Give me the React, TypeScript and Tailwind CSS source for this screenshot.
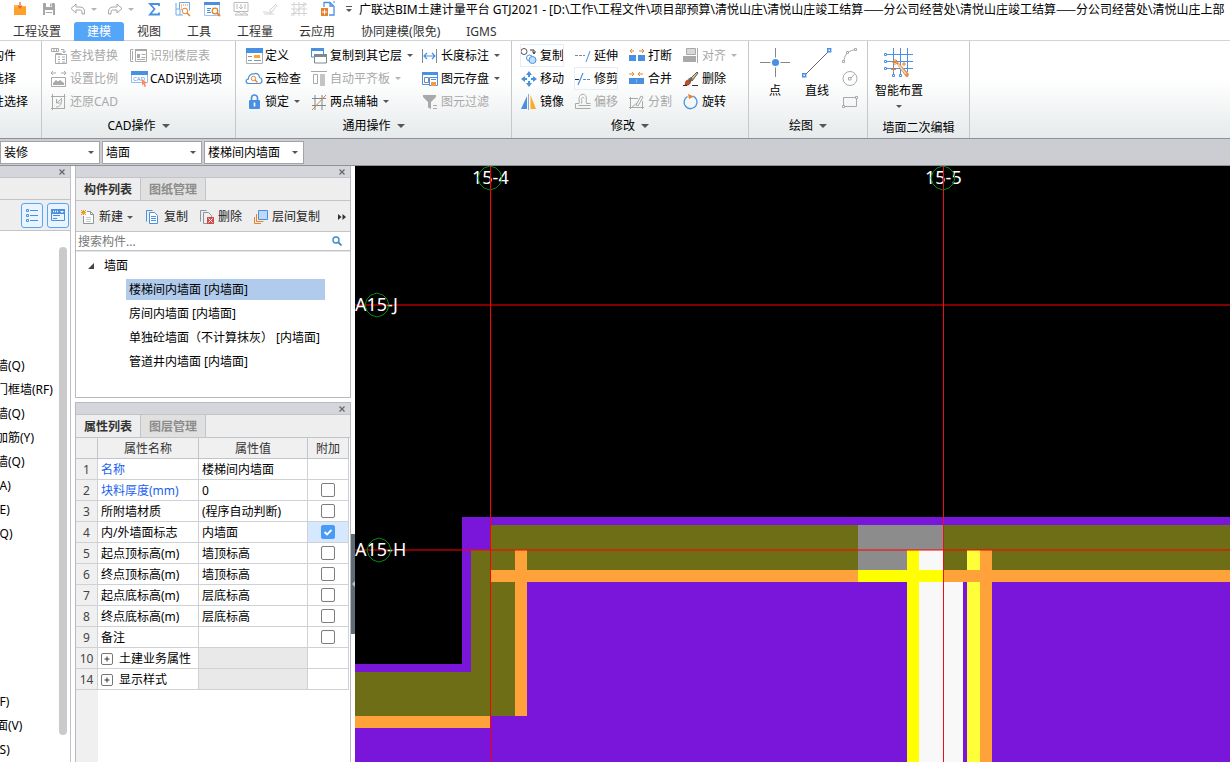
import React, { useState } from 'react';
import clsx from 'clsx';

const BLUE = '#4a90e2';
const GREY = '#a9a9a9';
const SLATE = '#7b8a92';
const ORANGE = '#e8822a';

type IconProps = { size?: number; className?: string; children: React.ReactNode };

function Icon({ size = 18, className, children }: IconProps) {
  return (
    <svg
      width={size}
      height={size}
      viewBox={`0 0 ${size} ${size}`}
      fill="none"
      className={clsx('shrink-0', className)}
      aria-hidden="true"
    >
      {children}
    </svg>
  );
}

function Caret({ className = 'text-[#555]', large }: { className?: string; large?: boolean }) {
  return (
    <svg
      width={large ? 8 : 6}
      height={large ? 4 : 3}
      viewBox="0 0 6 3"
      className={clsx('shrink-0', className)}
      aria-hidden="true"
    >
      <path d="M0 0h6L3 3z" fill="currentColor" />
    </svg>
  );
}

/* ---------- icons: quick access bar ---------- */

const OpenIcon = () => (
  <Icon>
    <path d="M3 5h4l1 1h7v9H3z" fill="#ffb54d" />
    <path d="M3 7h12v8H3z" fill="#fba12c" />
    <path d="M9 2v5M7 5.500 9 8l2-2.500" stroke="#e8622a" strokeWidth="1.2" />
  </Icon>
);

const SaveIcon = () => (
  <Icon>
    <path d="M3 3h11l1 1v11H3z" fill="#a6a6a6" />
    <path d="M6 3h6v4H6zM5 10h8v5H5z" fill="#fff" />
    <path d="M10 3.500h1.500v3H10zM6 12h6v1H6z" fill="#a6a6a6" />
  </Icon>
);

const UndoIcon = () => (
  <Icon>
    <path d="M2 8.500 7 4v3h4c3 0 4.500 2 4.500 4.500V14h-2.500v-2c0-1.500-.8-2-2-2H7v3z" stroke="#a4a4a4" />
  </Icon>
);

const RedoIcon = () => (
  <Icon>
    <path d="M16 8.500 11 4v3H7c-3 0-4.500 2-4.500 4.500V14H5v-2c0-1.500.8-2 2-2h4v3z" stroke="#a4a4a4" />
  </Icon>
);

const SigmaIcon = () => (
  <Icon>
    <path d="M14 6V4H5l4.500 5L5 14.500h9v-2" stroke={BLUE} strokeWidth="1.8" />
  </Icon>
);

const ReportIcon = () => (
  <Icon>
    <path d="M2 3v12h7M2 9h4v6M5.500 2.500h10v8M5.500 2.500V9" stroke="#6aa9ea" />
    <path d="M7 5h7M7 7h2M7 9h1" stroke={ORANGE} strokeDasharray="1 1" />
    <circle cx="11" cy="11" r="2.800" stroke={ORANGE} fill="#fff" />
    <path d="m13 13 3 3" stroke={ORANGE} strokeWidth="1.5" />
  </Icon>
);

const TableSearchIcon = () => (
  <Icon>
    <path d="M1.500 2.500h15v13h-15z" stroke="#9cc6ef" />
    <path d="M1 2h16v3H1z" fill={BLUE} />
    <path d="M4 8.500h4M4 10.500h3M4 12.500h4" stroke={BLUE} />
    <circle cx="12" cy="11" r="2.800" stroke={ORANGE} fill="#fff" strokeWidth="1.300" />
    <path d="m14 13 3 3" stroke={ORANGE} strokeWidth="1.8" />
  </Icon>
);

const MonitorIcon = () => (
  <Icon>
    <path d="M2 2.500h14v9H2zM9 4v5M7 7l2 2 2-2M5 4v5M13 4v5M3 15c2-3 4-3 6-1M9 15c2-3 4-3 7 0H3" stroke="#bbb" />
  </Icon>
);

const SketchIcon = () => (
  <Icon>
    <path d="M2 12.500c3-2 6 2 9 0M9 10l6-6M3 14h10M9 10v2h2l5-7" stroke="#d3d3d3" />
  </Icon>
);

const GridIcon = () => (
  <Icon>
    <path d="M4 2v14M9 2v14M14 2v14M1 4.500h16M1 9h16M1 13.500h16M1 16 16 3" stroke="#d3d3d3" />
  </Icon>
);

const DocumentAddIcon = () => (
  <Icon>
    <path d="M5 7V2.500h6l4 4V15h-5M11 2.500V6h4" stroke={BLUE} strokeWidth="1.300" />
    <path d="M2 8h7v8H2z" fill={ORANGE} />
    <path d="M5.500 9.500v5M3 12h5" stroke="#fff" />
    <path d="M15 1v2" stroke={BLUE} />
  </Icon>
);

/* ---------- icons: ribbon ---------- */

const FindReplaceIcon = () => (
  <Icon>
    <path d="M1.500 1.500h7v3h-7zM4 1.500v3M6.500 1.500v3M11 2.500h3V5M12.500 4 14 6l1.500-2M5.500 7.500h11v9h-11zM5.500 6.500h6" stroke={GREY} />
    <path d="M8 10h2M8 12.500h2M8 15h2M12 10h3M12 12.500h3M12 15h3" stroke={GREY} />
  </Icon>
);

const ScaleIcon = () => (
  <Icon>
    <path d="M1 3h5M3 1 1 3l2 2M11 3h5M14 1l2 2-2 2M1.500 7.500h14v9h-14z" stroke={GREY} />
    <path d="M3 15v-2l3-3 2 1.500L10 10l4 3v2z" fill={GREY} />
  </Icon>
);

const RestoreIcon = () => (
  <Icon>
    <path d="M2.500 1v16M1 3.500h14.500M14.500 1v14M1 15.500h14M6 14c4 0 6-3 5.500-8.500M12 5.500 7 9.500M6.500 6v4h4" stroke={GREY} />
  </Icon>
);

const FloorTableIcon = () => (
  <Icon>
    <path d="M3.500 2.500h-3v12h3M2.500 4v9M5.500 2.500h11v12h-11z" stroke={GREY} />
    <path d="M5 2h12v2H5zM7 7h3v4H7z" fill={GREY} />
    <path d="M11.500 7.500h4M11.500 10.500h4M7 12.500h8" stroke={GREY} />
  </Icon>
);

const CadIcon = () => (
  <Icon>
    <path d="M1.500 2.500h16v10h-16z" stroke="#8fbdf0" fill="#fff" />
    <path d="M1 1h17v4H1z" fill={BLUE} />
    <text x="3" y="11" fontSize="6" fill={BLUE}>CAD</text>
    <path d="m12 9 5 4-2 .5 1 3-1.500.5-1-3L12 16z" fill="#ff8a5c" />
  </Icon>
);

const DefineIcon = () => (
  <Icon>
    <path d="M1.500 1.500h16v15h-16z" stroke="#a8b0b5" fill="#fff" />
    <path d="M1 1h17v5H1z" fill={BLUE} />
    <path d="M9 8h6v3H9z" fill="#ffa52c" />
    <path d="M3 9.500h4M3 13.500h4M9 13.500h7" stroke="#8c979d" />
  </Icon>
);

const CloudCheckIcon = () => (
  <Icon>
    <path d="M4 13.500C.5 13.500 0 9.500 3.500 9 3 6 6 3.500 9 4c2-1.500 5.500 0 5.500 3.500 3 .5 3.500 5.500 0 6z" stroke={BLUE} strokeWidth="1.200" fill="#fff" />
    <circle cx="8.500" cy="8.500" r="2.200" stroke={ORANGE} />
    <path d="m10 10 2.500 2.500" stroke={ORANGE} strokeWidth="1.400" />
  </Icon>
);

const LockIcon = () => (
  <Icon>
    <path d="M6.500 8V5a3 3 0 0 1 6 0v3" stroke={BLUE} strokeWidth="1.600" />
    <rect x="4" y="7" width="11" height="9" rx="1" fill={BLUE} />
    <path d="M9.500 9.500v4" stroke="#fff" strokeWidth="1.600" />
  </Icon>
);

const CopyLayerIcon = () => (
  <Icon>
    <path d="M1.500 2h12v8h-12z" stroke={BLUE} />
    <path d="M1 1h13v3H1z" fill={BLUE} />
    <path d="M4.500 8h12v8h-12z" stroke={SLATE} fill="#fff" />
    <path d="M4 7h13v3H4z" fill={SLATE} />
  </Icon>
);

const AlignSlabIcon = () => (
  <Icon>
    <path d="M1 1.500h16M3.500 4.500h4v9h-4z" stroke={GREY} />
    <path d="M10 4h5v12h-5z" fill="#c4c4c4" />
  </Icon>
);

const TwoPointIcon = () => (
  <Icon>
    <path d="M5 2v15M12 2v15M2 5.500h14M2 12.500h14" stroke={SLATE} />
    <path d="M2 17 16 2" stroke={ORANGE} />
  </Icon>
);

const LengthIcon = () => (
  <Icon>
    <path d="M1.500 2v14M15.500 2v14" stroke={SLATE} />
    <path d="M3 9h11M6 6 3 9l3 3M11 6l3 3-3 3" stroke={BLUE} strokeWidth="1.200" />
  </Icon>
);

const StoreIcon = () => (
  <Icon>
    <path d="M1.500 2.500h15v12h-15z" stroke={BLUE} fill="#fff" />
    <path d="M1 2h16v3H1z" fill={BLUE} />
    <path d="M3.500 7.500h4v5h-4z" stroke={SLATE} />
    <path d="M8.500 7.500h8v8h-8z" stroke={BLUE} fill="#fff" />
    <path d="M10 12h5v4h-5z" fill="#f29a4a" />
    <path d="M10 9.500h5" stroke={BLUE} />
  </Icon>
);

const FilterIcon = () => (
  <Icon>
    <path d="M2 2h13v2l-5 5v7l-3-1.500V9L2 4z" fill={GREY} />
    <path d="M12 12.500h4M12 15.500h4" stroke={GREY} />
  </Icon>
);

const CopyIcon = () => (
  <Icon>
    <circle cx="4" cy="4.500" r="3" stroke="#555" />
    <path d="M10 3h4v3M12.500 4.500 14 7l1.500-2.500" stroke="#333" />
    <circle cx="9.500" cy="11" r="3" stroke={BLUE} fill="#fff" />
    <circle cx="12.500" cy="13" r="3.500" stroke={BLUE} fill="#bfe0fa" />
  </Icon>
);

const MoveIcon = () => (
  <Icon>
    <path d="m9 1 3 4H6zM9 17l3-4H6zM1 9l4-3v6zM17 9l-4-3v6z" fill={BLUE} />
    <path d="M9 4v3M9 11v3M4 9h3M11 9h3" stroke={BLUE} strokeWidth="2" />
  </Icon>
);

const MirrorIcon = () => (
  <Icon>
    <path d="M7 3v13H1z" fill={BLUE} />
    <path d="M10.500 2v14H16z" fill="#f8ac2a" />
    <path d="M8.500 1v16" stroke="#9ab" />
  </Icon>
);

const ExtendIcon = () => (
  <Icon>
    <path d="M1 8.500h10" stroke={SLATE} strokeDasharray="3 1" />
    <path d="M12 15 16 4" stroke={BLUE} />
  </Icon>
);

const TrimIcon = () => (
  <Icon>
    <path d="M1 9.500h4" stroke="#333" />
    <path d="M4 15 9 3" stroke={BLUE} strokeWidth="1.200" />
    <path d="M9 9.500h8" stroke={BLUE} strokeDasharray="3 1" />
  </Icon>
);

const OffsetIcon = () => (
  <Icon>
    <path d="M1.500 15.500v-5H5c1-2-1-4 .5-7s5.500-3 6.500 0-.5 5 .5 7h4M1.500 15.500h15M4.500 12.500h12M7.500 10.500c1-2-.5-4 0-5 1-2 2.500-1 2.500 0" stroke={GREY} />
  </Icon>
);

const BreakIcon = () => (
  <Icon>
    <path d="M2 4h4M4 2 2 4l2 2M11 4h5M14 2l2 2-2 2" stroke={ORANGE} />
    <path d="M1 8h7v6H1zM10 8h7v6h-7z" fill={BLUE} />
  </Icon>
);

const MergeIcon = () => (
  <Icon>
    <path d="M1 4h5M4 2l2 2-2 2M10 4h5M12 2l-2 2 2 2" stroke={ORANGE} />
    <path d="M1 8h15v6H1z" fill={BLUE} />
    <path d="M8.500 9v4" stroke="#7db4f2" />
  </Icon>
);

const SplitIcon = () => (
  <Icon>
    <path d="M1 5.500h9M2.500 4v12M1 14.500h15M14.500 8v8M4 14l5-4M8 12l2 1 5-9-2-1z" stroke={GREY} />
  </Icon>
);

const AlignIcon = () => (
  <Icon>
    <path d="M4.500 1.500h9v6h-9z" fill="#d8d8d8" stroke={GREY} />
    <path d="M1 9h13v6H1z" fill={GREY} />
    <path d="M15.500 1v15" stroke={GREY} />
  </Icon>
);

const EraseIcon = () => (
  <Icon>
    <path d="m8 9 7-7 1 1-6 8z" fill="#e9c48c" stroke="#333" strokeWidth=".8" />
    <path d="m6 9 3-2 2 2-3 4z" fill="#6b6b6b" />
    <path d="M4 11c2-2 5 0 4 2.500-1 2-4 2-5 1z" fill="#d9481c" stroke="#5b2010" strokeWidth=".6" />
    <path d="M1 15.500h4M10 15.500h6" stroke="#333" />
  </Icon>
);

const RotateIcon = () => (
  <Icon>
    <path d="M11 3.200A6.500 6.500 0 1 1 5.500 3.500" stroke={BLUE} strokeWidth="1.300" />
    <path d="m6 1 6 2.500L7 6z" fill={ORANGE} />
  </Icon>
);

const PointIcon = () => (
  <Icon size={30}>
    <path d="M15.500 0v29M0 14.500h30" stroke={SLATE} />
    <circle cx="15.500" cy="14.500" r="5" fill="#fff" />
    <circle cx="15.500" cy="14.500" r="3.600" fill={BLUE} />
  </Icon>
);

const LineIcon = () => (
  <Icon size={30}>
    <path d="M3 27 27 3" stroke="#667" />
    <path d="M.7 25.700h3v3h-3zM25.700.7h3v3h-3z" stroke={BLUE} strokeWidth="1.400" fill="#fff" />
  </Icon>
);

const ArcIcon = () => (
  <Icon>
    <path d="M2 15C2 8 6 3 15 2.500" stroke={GREY} />
    <path d="M.5 13.500h2v2h-2zM4.500 4.500h2v2h-2zM12.500 1.500h2v2h-2z" stroke={GREY} fill="#fff" />
  </Icon>
);

const CircleIcon = () => (
  <Icon>
    <circle cx="8" cy="8.500" r="7" stroke={GREY} />
    <path d="m9 8 3.500-4M6.500 7.500H9V10H6.500z" stroke={GREY} />
  </Icon>
);

const RectIcon = () => (
  <Icon>
    <path d="M1.500 4.500h13v9h-13z" stroke={GREY} />
    <path d="M.5 12.500h2v2h-2zM13.500 3.500h2v2h-2z" stroke={GREY} fill="#fff" />
  </Icon>
);

const SmartIcon = () => (
  <Icon size={30}>
    <path d="M9.500 0v28M16.500 0v28M23.500 0v24M1 6.500h28M1 13.500h28M1 20.500h28" stroke={BLUE} />
    <path d="M.5 5.500h2v2h-2zM.5 12.500h2v2h-2zM.5 19.500h2v2h-2zM8.500 26.500h2v2h-2zM15.500 26.500h2v2h-2z" stroke={BLUE} fill="#fff" />
    <path d="m12 15 2-1 11 12-1 3h-2z" fill="#e2904f" />
    <path d="m14 16 8 10" stroke="#f8d7b0" strokeWidth="1.400" />
    <path d="M11 11v6M8 14h6M9 12l4 4M13 12l-4 4M9.500 19v5M7 21.500h5M20 14v4M18 16h4" stroke={ORANGE} />
  </Icon>
);

/* ---------- icons: panels ---------- */

const NewIcon = () => (
  <Icon size={16}>
    <path d="M3.500 7v7.500h10v-9l-3-3H7" stroke="#8b959b" fill="#fff" />
    <path d="M10.500 2.500v3h3" stroke="#8b959b" />
    <path d="M6 8.500h5M6 10.500h5M6 12.500h5" stroke="#c3c9cc" />
    <path d="M1 1h1v1H1zM3 1h1v1H3zM5 1h1v1H5zM2 2h3v3H2zM1 3h1v1H1zM5 3h1v1H5zM1 5h1v1H1zM3 5h1v1H3zM5 5h1v1H5z" fill="#f39a1e" />
  </Icon>
);

const CopyDocIcon = () => (
  <Icon size={16}>
    <path d="M1.500 12.500v-11h6" stroke={BLUE} />
    <path d="M4.500 3.500h5l3 3v8h-8z" stroke={BLUE} fill="#fff" />
    <path d="M6 7.500h5M6 9.500h5M6 11.500h5" stroke={BLUE} />
  </Icon>
);

const DeleteDocIcon = () => (
  <Icon size={16}>
    <path d="M1.500 12.500v-11h6M4.500 14.500v-11h5l3 3v8z" stroke="#8b959b" />
    <path d="M8 8h7v7H8z" fill="#d24a4a" />
    <path d="m9.500 9.500 4 4M13.500 9.500l-4 4" stroke="#fff" />
  </Icon>
);

const LayerCopyIcon = () => (
  <Icon size={16}>
    <path d="M1.500 8v6.500H8M3.500 5v7.500h7" stroke={ORANGE} />
    <path d="M5.500 1.500h9v9h-9z" stroke={BLUE} fill="#bcd8fb" />
  </Icon>
);

/* ---------- ribbon ---------- */

type Tool = {
  label: string;
  icon?: React.ReactNode;
  disabled?: boolean;
  menu?: boolean;
  framed?: boolean;
};

function ToolButton({ label, icon, disabled, menu, framed }: Tool) {
  return (
    <button
      type="button"
      disabled={disabled}
      className={clsx(
        'flex h-[23px] items-center gap-0.5 whitespace-nowrap',
        disabled ? 'text-[#a8a8a8]' : 'text-black',
        framed && 'outline outline-1 -outline-offset-1 outline-[#e4eefb]',
      )}
    >
      {icon}
      {label}
      {menu && <Caret className={clsx('ml-[3px]', disabled ? 'text-[#b5b5b5]' : 'text-[#555]')} />}
    </button>
  );
}

function ToolColumn({ tools, className }: { tools: Tool[]; className?: string }) {
  return (
    <div className={clsx('flex shrink-0 flex-col items-start', className)}>
      {tools.map((tool) => (
        <ToolButton key={tool.label} {...tool} />
      ))}
    </div>
  );
}

type GroupProps = { title?: string; menu?: boolean; className?: string; children: React.ReactNode };

function RibbonGroup({ title, menu = true, className, children }: GroupProps) {
  return (
    <section className="flex shrink-0 flex-col border-r border-[#c6c9cb] pt-[3px]">
      <div className={clsx('flex h-[69px]', className)}>{children}</div>
      <div className={clsx('flex h-6 items-center justify-center gap-1.5 text-black', menu ? 'pt-0.5' : 'pt-1.5')}>
        {title}
        {title && menu && <Caret large />}
      </div>
    </section>
  );
}

const cadTools: Tool[][] = [
  [
    { label: '查找替换', icon: <FindReplaceIcon />, disabled: true },
    { label: '设置比例', icon: <ScaleIcon />, disabled: true },
    { label: '还原CAD', icon: <RestoreIcon />, disabled: true },
  ],
  [
    { label: '识别楼层表', icon: <FloorTableIcon />, disabled: true },
    { label: 'CAD识别选项', icon: <CadIcon /> },
  ],
];

const commonTools: Tool[][] = [
  [
    { label: '定义', icon: <DefineIcon /> },
    { label: '云检查', icon: <CloudCheckIcon /> },
    { label: '锁定', icon: <LockIcon />, menu: true },
  ],
  [
    { label: '复制到其它层', icon: <CopyLayerIcon />, menu: true },
    { label: '自动平齐板', icon: <AlignSlabIcon />, menu: true, disabled: true },
    { label: '两点辅轴', icon: <TwoPointIcon />, menu: true },
  ],
  [
    { label: '长度标注', icon: <LengthIcon />, menu: true },
    { label: '图元存盘', icon: <StoreIcon />, menu: true },
    { label: '图元过滤', icon: <FilterIcon />, disabled: true },
  ],
];

const editTools: Tool[][] = [
  [
    { label: '复制', icon: <CopyIcon />, framed: true },
    { label: '移动', icon: <MoveIcon /> },
    { label: '镜像', icon: <MirrorIcon /> },
  ],
  [
    { label: '延伸', icon: <ExtendIcon /> },
    { label: '修剪', icon: <TrimIcon />, framed: true },
    { label: '偏移', icon: <OffsetIcon />, disabled: true },
  ],
  [
    { label: '打断', icon: <BreakIcon /> },
    { label: '合并', icon: <MergeIcon /> },
    { label: '分割', icon: <SplitIcon />, disabled: true },
  ],
  [
    { label: '对齐', icon: <AlignIcon />, disabled: true, menu: true },
    { label: '删除', icon: <EraseIcon /> },
    { label: '旋转', icon: <RotateIcon /> },
  ],
];

function BigButton({ label, icon, menu }: Tool) {
  return (
    <button type="button" className="flex flex-col items-center whitespace-nowrap pt-1">
      {icon}
      <span className="mt-[5px] leading-4">{label}</span>
      {menu && <Caret className="mt-1.5 text-[#555]" />}
    </button>
  );
}

function Ribbon() {
  return (
    <div className="flex h-[97px] shrink-0 overflow-hidden bg-linear-to-b from-white from-40% to-[#e6eaeb]">
      <RibbonGroup className="w-[41px] overflow-hidden">
        <ToolColumn
          className="-ml-8"
          tools={[{ label: '拾取构件' }, { label: '批量选择' }, { label: '按属性选择' }]}
        />
      </RibbonGroup>
      <RibbonGroup title="CAD操作" className="pl-2">
        <ToolColumn className="w-20" tools={cadTools[0]} />
        <ToolColumn className="w-[105px]" tools={cadTools[1]} />
      </RibbonGroup>
      <RibbonGroup title="通用操作" className="pl-[9px]">
        <ToolColumn className="w-[65px]" tools={commonTools[0]} />
        <ToolColumn className="w-[111px]" tools={commonTools[1]} />
        <ToolColumn className="w-[90px]" tools={commonTools[2]} />
      </RibbonGroup>
      <RibbonGroup title="修改" className="pl-2">
        <ToolColumn className="w-[54px]" tools={editTools[0]} />
        <ToolColumn className="w-[54px]" tools={editTools[1]} />
        <ToolColumn className="w-[54px]" tools={editTools[2]} />
        <ToolColumn className="w-[66px]" tools={editTools[3]} />
      </RibbonGroup>
      <RibbonGroup title="绘图" className="gap-3 pr-[9px] pl-[11px]">
        <BigButton label="点" icon={<PointIcon />} />
        <BigButton label="直线" icon={<LineIcon />} />
        <div className="-ml-0.5 flex w-4 flex-col">
          <button type="button" aria-label="弧" className="flex h-[23px] items-center"><ArcIcon /></button>
          <button type="button" aria-label="圆" className="flex h-[23px] items-center"><CircleIcon /></button>
          <button type="button" aria-label="矩形" className="flex h-[23px] items-center"><RectIcon /></button>
        </div>
      </RibbonGroup>
      <RibbonGroup title="墙面二次编辑" menu={false} className="w-[101px] pl-[7px]">
        <BigButton label="智能布置" icon={<SmartIcon />} menu />
      </RibbonGroup>
    </div>
  );
}

/* ---------- title and menu ---------- */

function Dash() {
  return <span className="font-['Noto_Sans_CJK_SC',sans-serif]">——</span>;
}

function TitleBar() {
  return (
    <header className="flex h-[22px] shrink-0 items-center overflow-hidden whitespace-nowrap pb-1 text-black">
      <div className="flex shrink-0 items-center pl-[11px]">
        <button type="button" aria-label="打开"><OpenIcon /></button>
        <button type="button" aria-label="保存" className="ml-[11px]"><SaveIcon /></button>
        <button type="button" aria-label="撤销" className="ml-[11px] flex items-center gap-1"><UndoIcon /><Caret className="text-[#b4b4b4]" /></button>
        <button type="button" aria-label="恢复" className="ml-[9px] flex items-center gap-1"><RedoIcon /><Caret className="text-[#b4b4b4]" /></button>
        <button type="button" aria-label="汇总计算" className="ml-[11px]"><SigmaIcon /></button>
        <button type="button" aria-label="查看报表" className="ml-[11px]"><ReportIcon /></button>
        <button type="button" aria-label="查看工程量" className="ml-[11px]"><TableSearchIcon /></button>
        <button type="button" aria-label="三维" className="ml-[11px]"><MonitorIcon /></button>
        <button type="button" aria-label="编辑钢筋" className="ml-[11px]"><SketchIcon /></button>
        <button type="button" aria-label="轴网" className="ml-[11px]"><GridIcon /></button>
        <button type="button" aria-label="新建文件" className="ml-[11px]"><DocumentAddIcon /></button>
        <button type="button" aria-label="更多" className="mr-[7px] ml-[9px] flex flex-col gap-0.5">
          <span className="h-px w-1.5 bg-[#555]" />
          <Caret />
        </button>
      </div>
      <h1 className="shrink-0 pt-px">
        广联达BIM土建计量平台 GTJ2021 - [D:\工作\工程文件\项目部预算\清悦山庄\清悦山庄竣工结算
        <Dash />
        分公司经营处\清悦山庄竣工结算
        <Dash />
        分公司经营处\清悦山庄上部
      </h1>
    </header>
  );
}

const menus = ['工程设置', '建模', '视图', '工具', '工程量', '云应用', '协同建模(限免)', 'IGMS'];

function MenuTabs() {
  const [active, setActive] = useState('建模');

  return (
    <nav className="flex h-[19px] shrink-0 border-b border-[#d2d3d5]">
      {menus.map((menu) => (
        <button
          key={menu}
          type="button"
          onClick={() => setActive(menu)}
          className={clsx(
            '-mb-px h-[19px] px-[13px] leading-[19px] whitespace-nowrap',
            menu === active ? 'rounded-t-[3px] bg-[#55a5f8] text-white' : 'text-[#333]',
          )}
        >
          {menu}
        </button>
      ))}
    </nav>
  );
}

function FilterSelect({ label, value }: { label: string; value: string }) {
  return (
    <div className="relative w-[100px]">
      <select
        aria-label={label}
        defaultValue={value}
        className="h-[23px] w-full appearance-none border border-[#a2a4a8] bg-white pl-[3px] text-black"
      >
        <option>{value}</option>
      </select>
      <Caret className="pointer-events-none absolute top-[10px] right-1.5 text-[#555]" />
    </div>
  );
}

/* ---------- docked panels ---------- */

function PanelHeader() {
  return (
    <div className="flex h-3 shrink-0 items-center justify-end border-b border-[#c2c4ca] bg-[#d4d6db] pr-[5px]">
      <button type="button" aria-label="关闭">
        <svg width="6" height="6" viewBox="0 0 6 6" aria-hidden="true">
          <path d="m.5.5 5 5M5.500.5l-5 5" stroke="#666" strokeWidth="1.200" />
        </svg>
      </button>
    </div>
  );
}

function PanelTabs({ tabs }: { tabs: string[] }) {
  return (
    <div className="flex h-[23px] shrink-0 border-b border-[#c2c4ca] bg-[#eee]">
      {tabs.map((tab, i) => (
        <button
          key={tab}
          type="button"
          className={clsx(
            'border-r border-[#c2c4ca] px-2 pt-0.5 font-bold whitespace-nowrap',
            i === 0 ? 'text-[#333]' : 'bg-[#e0e0e0] text-[#8c8c8c]',
          )}
        >
          {tab}
        </button>
      ))}
    </div>
  );
}

const wallItems = ['剪力墙(Q)', '人防门框墙(RF)', '砌体墙(Q)', '砌体加筋(Y)', '保温墙(Q)', '暗梁(A)', '墙垛(E)', '幕墙(Q)'];
const finishItems = ['房间(F)', '楼地面(V)', '踢脚(S)'];

const viewButton = 'flex h-[25px] w-[22px] items-center justify-center rounded-[3px] border border-[#55a5f8] bg-[#eaf4ff]';

function NavPanel() {
  return (
    <aside className="flex w-[71px] shrink-0 flex-col overflow-hidden border-r border-[#bfc1c7] bg-white">
      <PanelHeader />
      <div className="h-[22px] shrink-0 border-b border-[#c2c4ca] bg-[#eee]" />
      <div className="flex h-[31px] shrink-0 items-center justify-end gap-1 border-b border-[#c2c4ca] bg-[#eee] pr-px">
        <button type="button" aria-label="列表" className={viewButton}>
          <Icon size={16}>
            <path d="M2.500 2.500h2v2h-2zM2.500 7.500h2v2h-2zM2.500 12.500h2v2h-2zM6 3.500h8M6 8.500h8M6 13.500h8" stroke={BLUE} />
          </Icon>
        </button>
        <button type="button" aria-label="面板" className={viewButton}>
          <Icon size={16}>
            <path d="M1.500 2.500h13v11h-13z" stroke={BLUE} />
            <path d="M1 2h14v5H1z" fill={BLUE} />
            <path d="M3 4.500h1M5 4.500h1M7 4.500h1" stroke="#fff" strokeWidth="1.500" />
            <path d="M10 4h4l-2 2z" fill="#fff" />
            <path d="M3 8.500h7M3 11.500h4" stroke={BLUE} />
          </Icon>
        </button>
      </div>
      <div className="flex min-h-0 flex-1 justify-between pr-[3px]">
        <ul className="-ml-7 pt-[123px] leading-6 whitespace-nowrap text-black">
          {wallItems.map((item) => (
            <li key={item}>{item}</li>
          ))}
          <li className="h-36" aria-hidden="true" />
          {finishItems.map((item) => (
            <li key={item}>{item}</li>
          ))}
        </ul>
        <div className="mt-4 mb-[27px] w-2 shrink-0 rounded-full bg-[#cacaca]" />
      </div>
    </aside>
  );
}

const components = [
  '楼梯间内墙面 [内墙面]',
  '房间内墙面 [内墙面]',
  '单独砼墙面（不计算抹灰） [内墙面]',
  '管道井内墙面 [内墙面]',
];

function ComponentPanel() {
  const [selected, setSelected] = useState(components[0]);

  return (
    <section className="flex shrink-0 flex-col border border-t-0 border-[#b8bac0] bg-white">
      <PanelHeader />
      <PanelTabs tabs={['构件列表', '图纸管理']} />
      <div className="flex h-[31px] items-center border-b border-[#c2c4ca] bg-[#eee] pt-0.5 pl-1 whitespace-nowrap text-[#222]">
        <button type="button" className="flex w-[65px] items-center gap-[3px]"><NewIcon />新建<Caret className="ml-px text-[#555]" /></button>
        <button type="button" className="flex w-[54px] items-center gap-[3px]"><CopyDocIcon />复制</button>
        <button type="button" className="flex w-[54px] items-center gap-[3px]"><DeleteDocIcon />删除</button>
        <button type="button" className="flex items-center gap-[3px]"><LayerCopyIcon />层间复制</button>
        <button type="button" aria-label="更多" className="mr-1 ml-auto">
          <svg width="8" height="6" viewBox="0 0 8 6" aria-hidden="true">
            <path d="M0 0v6l3.500-3zM4.500 0v6L8 3z" fill="#333" />
          </svg>
        </button>
      </div>
      <div className="flex h-[19px] items-center border-b border-[#c2c4ca] pr-2">
        <input
          type="text"
          aria-label="搜索构件"
          placeholder="搜索构件..."
          className="h-full min-w-0 flex-1 pl-0.5 outline-none placeholder:text-[#777]"
        />
        <Icon size={10}>
          <circle cx="4" cy="4" r="3" stroke="#3c8ec4" strokeWidth="1.400" />
          <path d="m6 6 3.500 3.500" stroke="#3c8ec4" strokeWidth="1.800" />
        </Icon>
      </div>
      <div className="h-[146px] border-t border-[#e4e5e8] text-black">
        <button type="button" className="flex h-[27px] items-center gap-[10px] pl-3">
          <svg width="6" height="6" viewBox="0 0 6 6" aria-hidden="true">
            <path d="M6 0v6H0z" fill="#444" />
          </svg>
          墙面
        </button>
        <ul className="flex flex-col gap-[3px] pr-[25px] pl-[50px]">
          {components.map((name) => (
            <li key={name}>
              <button
                type="button"
                onClick={() => setSelected(name)}
                className={clsx(
                  'block h-[21px] w-full pl-[3px] text-left leading-[21px] whitespace-nowrap',
                  name === selected && 'bg-[#b0cbec]',
                )}
              >
                {name}
              </button>
            </li>
          ))}
        </ul>
      </div>
    </section>
  );
}

type Property = { no: number; name: string; value?: string; checked?: boolean; link?: boolean; group?: boolean };

const properties: Property[] = [
  { no: 1, name: '名称', value: '楼梯间内墙面', link: true },
  { no: 2, name: '块料厚度(mm)', value: '0', checked: false, link: true },
  { no: 3, name: '所附墙材质', value: '(程序自动判断)', checked: false },
  { no: 4, name: '内/外墙面标志', value: '内墙面', checked: true },
  { no: 5, name: '起点顶标高(m)', value: '墙顶标高', checked: false },
  { no: 6, name: '终点顶标高(m)', value: '墙顶标高', checked: false },
  { no: 7, name: '起点底标高(m)', value: '层底标高', checked: false },
  { no: 8, name: '终点底标高(m)', value: '层底标高', checked: false },
  { no: 9, name: '备注', value: '', checked: false },
  { no: 10, name: '土建业务属性', group: true },
  { no: 14, name: '显示样式', group: true },
];

function PropertyRow({ row }: { row: Property }) {
  const [checked, setChecked] = useState(!!row.checked);
  const cell = 'h-[21px] border-r border-b border-[#d0d1d4]';

  return (
    <tr>
      <td className={clsx(cell, 'bg-[#f0f0f0] pt-0.5 text-center text-[#444]')}>{row.no}</td>
      <td className={clsx(cell, 'pt-0.5', row.link ? 'text-[#1a5ff0]' : 'text-black')}>
        <div className="flex items-center pl-[3px]">
          {row.group && (
            <button
              type="button"
              aria-label="展开"
              className="mr-1.5 flex size-3 items-center justify-center rounded-xs border border-[#777] bg-white"
            >
              <svg width="6" height="6" viewBox="0 0 6 6" aria-hidden="true">
                <path d="M3 .5v5M.5 3h5" stroke="#333" />
              </svg>
            </button>
          )}
          {row.name}
        </div>
      </td>
      <td className={clsx(cell, 'pt-0.5 pl-[3px] text-black', row.group && 'bg-[#e9e9e9]')}>{row.value}</td>
      <td className={clsx(cell, 'p-0', checked && 'bg-[#d5e8fd]')}>
        {row.checked !== undefined && (
          <label className="relative mx-auto block size-[14px]">
            <input
              type="checkbox"
              aria-label={row.name}
              checked={checked}
              onChange={(e) => setChecked(e.target.checked)}
              className="block size-[14px] appearance-none rounded-xs border border-[#7d7d7d] bg-white checked:border-[#4a9bf5] checked:bg-[#4a9bf5]"
            />
            {checked && (
              <svg width="14" height="14" viewBox="0 0 14 14" fill="none" className="absolute inset-0" aria-hidden="true">
                <path d="m3.500 7 2.500 2.500L10.500 5" stroke="#fff" strokeWidth="1.800" />
              </svg>
            )}
          </label>
        )}
      </td>
    </tr>
  );
}

function PropertyPanel() {
  const head = 'h-[21px] border-r border-b border-[#c2c4ca] pt-0.5 font-normal';

  return (
    <section className="flex min-h-0 flex-1 flex-col border border-b-0 border-[#b8bac0] bg-white">
      <PanelHeader />
      <PanelTabs tabs={['属性列表', '图层管理']} />
      <table className="w-full table-fixed border-separate border-spacing-0 pr-px leading-4">
        <colgroup>
          <col className="w-[22px]" />
          <col className="w-[101px]" />
          <col />
          <col className="w-[41px]" />
        </colgroup>
        <thead className="bg-[#f0f0f0] text-[#333]">
          <tr>
            <th className={head} aria-label="序号" />
            <th className={head}>属性名称</th>
            <th className={head}>属性值</th>
            <th className={head}>附加</th>
          </tr>
        </thead>
        <tbody>
          {properties.map((row) => (
            <PropertyRow key={row.no} row={row} />
          ))}
        </tbody>
      </table>
      <div className="w-[22px] flex-1 bg-[#f0f0f0]" />
    </section>
  );
}

/* ---------- drawing area ---------- */

function AxisMark({ cx, cy, x, label }: { cx: number; cy: number; x: number; label: string }) {
  return (
    <g>
      <text x={x} y={cy + 6} fontSize="18" fill="#fff">{label}</text>
      <polygon
        points="12,0 10,6 6,10 0,12 -6,10 -10,6 -12,0 -10,-6 -6,-10 0,-12 6,-10 10,-6"
        transform={`translate(${cx} ${cy})`}
        fill="none"
        stroke="#008a10"
      />
    </g>
  );
}

function DrawingCanvas() {
  const far = 4000;

  return (
    <main className="min-w-0 flex-1 overflow-hidden bg-black">
      <svg width="100%" height="100%" className="block" shapeRendering="crispEdges" role="img" aria-label="墙面平面图">
        <path d={`M107 351H${far}V${far}H0V498H107z`} fill="#7a15da" />
        <path d={`M135 359H${far}V404H160V550H0V506H116V384H135z`} fill="#6e6e16" />
        <rect x="160" y="384" width="12" height="166" fill="#ffa239" />
        <rect x="0" y="550" width="135" height="12" fill="#ffa239" />
        <rect x="564" y="384" width="44" height={far} fill="#f8f8f8" />
        <rect x="588" y="384" width="20" height="20" fill="#6e6e16" />
        <rect x="612" y="384" width="13" height={far} fill="#ffff39" />
        <rect x="625" y="384" width="12" height={far} fill="#ffa239" />
        <rect x="135" y="404" width={far} height="12" fill="#ffa239" />
        <path d="M503 359H588V384H552V404H503z" fill="#8c8c8c" />
        <rect x="503" y="404" width="85" height="12" fill="#ff0" />
        <rect x="552" y="384" width="12" height={far} fill="#ff0" />
        <rect x="0" y="138" width="100%" height="2" fill="#f00" fillOpacity=".5" />
        <rect x="0" y="383" width="100%" height="2" fill="#f00" fillOpacity=".5" />
        <g shapeRendering="auto">
          <AxisMark cx={135} cy={12} x={117} label="15-4" />
          <AxisMark cx={588} cy={12} x={570} label="15-5" />
          <AxisMark cx={22} cy={139} x={0} label="A15-J" />
          <AxisMark cx={24} cy={384} x={0} label="A15-H" />
        </g>
        <rect x="135" y="0" width="1" height="100%" fill="#f00" />
        <rect x="588" y="0" width="1" height="100%" fill="#e8101c" />
      </svg>
    </main>
  );
}

export default function App() {
  return (
    <div className="flex h-screen flex-col overflow-hidden bg-white font-['Noto_Sans','Noto_Sans_CJK_SC',sans-serif] text-xs">
      <TitleBar />
      <MenuTabs />
      <Ribbon />
      <div className="flex h-7 shrink-0 gap-0.5 border-y border-[#8f9197] bg-[#cbcdd2] pt-0.5">
        <FilterSelect label="构件类别" value="装修" />
        <FilterSelect label="构件类型" value="墙面" />
        <FilterSelect label="构件名称" value="楼梯间内墙面" />
      </div>
      <div className="flex min-h-0 flex-1">
        <NavPanel />
        <div className="ml-1 flex w-[276px] shrink-0 flex-col gap-1">
          <ComponentPanel />
          <PropertyPanel />
        </div>
        <div className="flex w-1 shrink-0 flex-col pt-[368px]">
          <button type="button" aria-label="折叠" className="flex h-[100px] items-center bg-[#5f6c75]">
            <svg width="4" height="6" viewBox="0 0 4 6" aria-hidden="true">
              <path d="M4 0v6L1 3z" fill="#b8c0c5" />
            </svg>
          </button>
        </div>
        <DrawingCanvas />
      </div>
    </div>
  );
}
